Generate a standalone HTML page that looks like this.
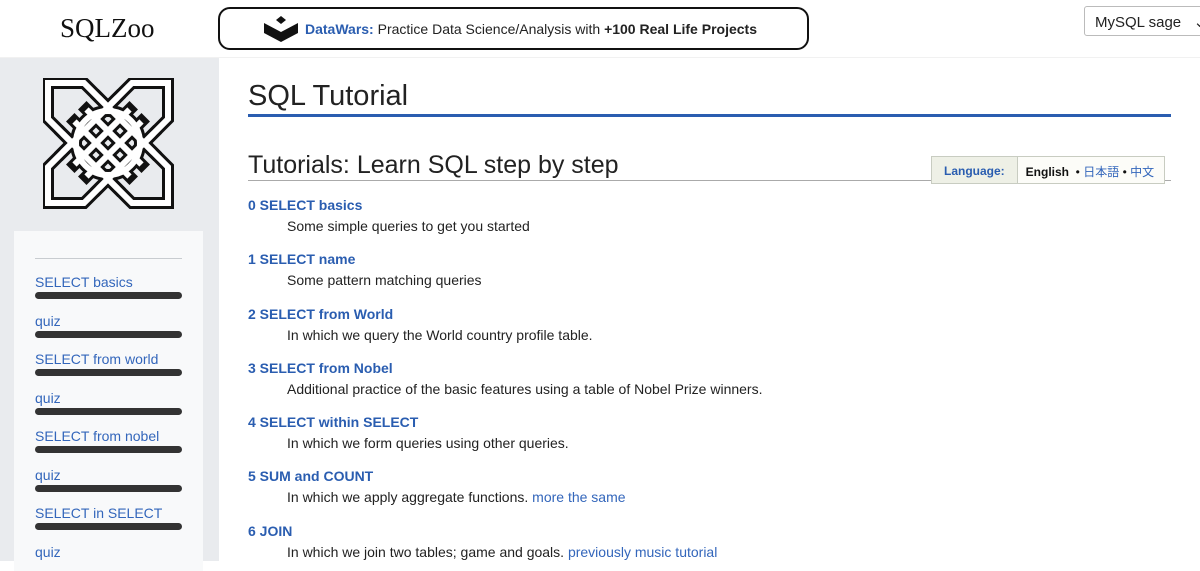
<!DOCTYPE html>
<html><head><meta charset="utf-8"><style>
*{margin:0;padding:0;box-sizing:border-box}
body{width:1200px;height:561px;overflow:hidden;background:#fff;font-family:"Liberation Sans","Noto Sans CJK JP",sans-serif;position:relative}
.top{position:absolute;left:0;top:0;width:1200px;height:58px;background:#fff;border-bottom:1px solid #f1f1f1}
.brand{position:absolute;left:60px;top:13px;font-family:"Liberation Serif",serif;font-size:27px;color:#111}
.ad{position:absolute;left:218px;top:7px;width:591px;height:43px;border:2px solid #111;border-radius:12px;font-size:14px;color:#222;padding:12px 0 0 85px}
.ad b.l{color:#2a5db0;font-weight:bold}
.sel{position:absolute;left:1084px;top:6px;width:130px;height:30px;border:1px solid #bbb;border-radius:3px;font-size:15px;padding:6px 0 0 10px;color:#222}
.side{position:absolute;left:0;top:58px;width:219px;height:503px;background:#e9ebee}
.panel{position:absolute;left:14px;top:231px;width:189px;height:340px;background:#f8f9fa}
.panel hr{position:absolute;left:21px;top:27px;width:147px;border:0;border-top:1px solid #c8ccd0}
.si{position:absolute;left:21px;font-size:14px;color:#3366bb}
.bar{position:absolute;left:21px;width:147px;height:7px;border-radius:4px;background:#333}
h1{position:absolute;left:248px;top:80px;font-weight:normal;font-size:29px;color:#222}
.bl{position:absolute;left:248px;top:114px;width:923px;height:3px;background:#2a5db0}
h2{position:absolute;left:248px;top:151px;font-weight:normal;font-size:25px;color:#222}
.gl{position:absolute;left:248px;top:180px;width:923px;height:1px;background:#aaa}
.lang{position:absolute;left:931px;top:156px;height:28px;border:1px solid #c8ccc1;background:#f8f9fa;font-size:12px;display:flex}
.lang .a{color:#2a5db0;font-weight:bold;padding:7px 12px 0;border-right:1px solid #c8ccc1;background:#eef0e6}
.lang .b{padding:6px 10px 0 8px;color:#111;background:#fcfcf8}
.lang .b a{color:#3366bb;font-weight:normal}
.it{position:absolute;left:248px;font-size:14px;font-weight:bold;color:#2a5db0}
.d{position:absolute;left:287px;font-size:14px;color:#222}
.d a{color:#3366bb}
</style></head><body>
<div class="top">
<div class="brand">SQLZoo</div>
<div class="ad"><svg style="position:absolute;left:44px;top:7px" width="34" height="26" viewBox="0 0 34 26"><path d="M17 0l5 4-5 4-5-4z" fill="#111"/><path d="M0 7l17 9 17-9v10l-17 9-17-9z" fill="#111"/></svg><b class="l">DataWars:</b> Practice Data Science/Analysis with <b>+100 Real Life Projects</b></div>
<div class="sel">MySQL sage &nbsp;&nbsp;⌄</div>
</div>
<div class="side">
<svg style="position:absolute;left:43px;top:20px" width="131" height="131" viewBox="0 0 131 131">
<g fill="none" stroke-linecap="square">
<g stroke="#111" stroke-width="12">
<path d="M5 5h36l24 24 24-24h36v36l-24 24 24 24v36h-36l-24-24-24 24h-36v-36l24-24-24-24z"/>
<circle cx="65" cy="65" r="32"/>
<path d="M19.5 55.5L74.5 110.5M31.5 43.5L86.5 98.5M43.5 31.5L98.5 86.5M55.5 19.5L110.5 74.5M19.5 74.5L74.5 19.5M31.5 86.5L86.5 31.5M43.5 98.5L98.5 43.5M55.5 110.5L110.5 55.5"/>
</g>
<g stroke="#fff" stroke-width="6" stroke-linecap="butt">
<path d="M5 5h36l24 24 24-24h36v36l-24 24 24 24v36h-36l-24-24-24 24h-36v-36l24-24-24-24z"/>
<circle cx="65" cy="65" r="32"/>
<path d="M19.5 55.5L74.5 110.5M31.5 43.5L86.5 98.5M43.5 31.5L98.5 86.5M55.5 19.5L110.5 74.5M19.5 74.5L74.5 19.5M31.5 86.5L86.5 31.5M43.5 98.5L98.5 43.5M55.5 110.5L110.5 55.5"/>
</g>
</g>
</svg>
<div class="panel" style="top:173px"><hr>
<div class="si" style="top:43px">SELECT basics</div><div class="bar" style="top:61px"></div>
<div class="si" style="top:82px">quiz</div><div class="bar" style="top:100px"></div>
<div class="si" style="top:120px">SELECT from world</div><div class="bar" style="top:138px"></div>
<div class="si" style="top:159px">quiz</div><div class="bar" style="top:177px"></div>
<div class="si" style="top:197px">SELECT from nobel</div><div class="bar" style="top:215px"></div>
<div class="si" style="top:236px">quiz</div><div class="bar" style="top:254px"></div>
<div class="si" style="top:274px">SELECT in SELECT</div><div class="bar" style="top:292px"></div>
<div class="si" style="top:313px">quiz</div>
</div></div>
<h1>SQL Tutorial</h1><div class="bl"></div>
<h2>Tutorials: Learn SQL step by step</h2><div class="gl"></div>
<div class="lang"><div class="a">Language:</div><div class="b"><b>English</b> &nbsp;• <a>日本語</a> • <a>中文</a></div></div>
<div class="it" style="top:197px">0 SELECT basics</div><div class="d" style="top:218px">Some simple queries to get you started</div>
<div class="it" style="top:251px">1 SELECT name</div><div class="d" style="top:272px">Some pattern matching queries</div>
<div class="it" style="top:306px">2 SELECT from World</div><div class="d" style="top:327px">In which we query the World country profile table.</div>
<div class="it" style="top:360px">3 SELECT from Nobel</div><div class="d" style="top:381px">Additional practice of the basic features using a table of Nobel Prize winners.</div>
<div class="it" style="top:414px">4 SELECT within SELECT</div><div class="d" style="top:435px">In which we form queries using other queries.</div>
<div class="it" style="top:468px">5 SUM and COUNT</div><div class="d" style="top:489px">In which we apply aggregate functions. <a>more the same</a></div>
<div class="it" style="top:523px">6 JOIN</div><div class="d" style="top:544px">In which we join two tables; game and goals. <a>previously music tutorial</a></div>
</body></html>
